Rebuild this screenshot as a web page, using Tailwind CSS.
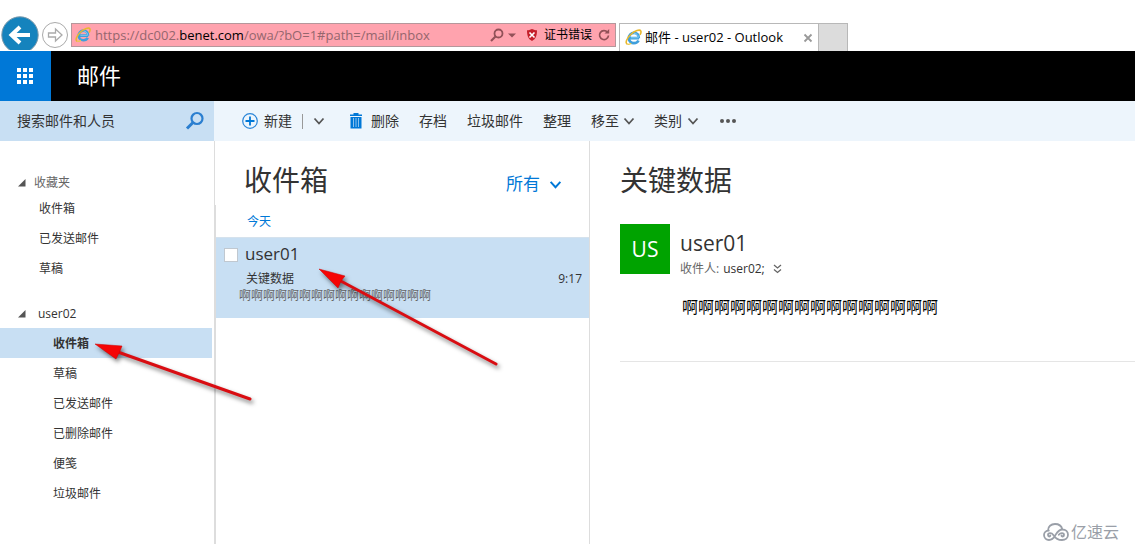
<!DOCTYPE html>
<html lang="zh-CN">
<head>
<meta charset="utf-8">
<title>邮件 - user02 - Outlook</title>
<script src="https://cdn.jsdelivr.net/npm/@tailwindcss/browser@4"></script>
</head>
<body class="bg-white font-['Open_Sans','Noto_Sans_CJK_SC',sans-serif] text-xs text-[#333333]">
<svg class="hidden">
  <symbol id="ie" viewBox="0 0 16 16">
    <path d="M13.2 8.6H5.1M13 8.6C13.3 5.300 11 3.600 8.500 3.600 5.700 3.600 3.700 5.800 3.700 8.500 3.700 11.300 5.700 13.300 8.400 13.300c2 0 3.500-.8 4.300-2.500" fill="none" stroke="#3f9fdc" stroke-width="2.600"/>
    <path d="M12.600 8.300H5.500M12.600 7.800C12.500 5.600 10.700 4.100 8.500 4" fill="none" stroke="#86d0f5" stroke-width=".9"/>
    <path d="M2.400 14.300C-.3 13.500 1.600 8.800 5.400 5.200 9.300 1.500 14 .1 14.900 1.900c.5 1-.1 2.400-.8 3.600" fill="none" stroke="#e8b82e" stroke-width="1.500"/>
    <path d="M2.400 14.300c1 .4 2.300-.2 3.500-.9" fill="none" stroke="#e8c84e" stroke-width="1.300"/>
  </symbol>
  <symbol id="chev" viewBox="0 0 12 12"><path d="M1.500 3.500 6 8.500l4.500-5" fill="none" stroke="currentColor" stroke-width="1.800"/></symbol>
  <symbol id="fold" viewBox="0 0 8 8"><path d="M7.500 0v7.500H0z" fill="#555"/></symbol>
</svg>

<div class="relative flex min-h-screen flex-col overflow-hidden">
  <header class="flex h-[51px] items-end">
    <div class="flex h-9 w-[71px] shrink-0 items-start">
      <button aria-label="后退" class="h-[35px] w-10 overflow-hidden"><svg class="h-10 w-10" viewBox="0 0 40 40"><circle cx="20" cy="20" r="18.200" fill="#1583bd" stroke="#7d9aab"/><path d="M30 20H12M20 12l-8.500 8 8.500 8" fill="none" stroke="#fff" stroke-width="4"/></svg></button>
      <button aria-label="前进" class="h-10 w-[30px]"><svg class="h-10 w-[30px]" viewBox="0 0 30 40"><circle cx="15" cy="20" r="12.500" fill="#fff" stroke="#aaa"/><path d="M8.500 18h7v-4l6.500 6-6.500 6v-4h-7z" fill="#fff" stroke="#aaa" stroke-width="1.300"/></svg></button>
    </div>
    <div class="mb-1 flex h-6 w-[545px] items-center border border-[#b5979b] bg-[#ffa3ae] pr-1 pl-[3px]">
      <svg class="mr-1 h-4 w-4"><use href="#ie"/></svg>
      <div role="textbox" aria-label="地址" contenteditable="true" spellcheck="false" class="flex-1 text-[13px] leading-5 whitespace-nowrap text-[#95666d]">https://dc002.<span class="text-black">benet.com</span>/owa/?bO=1#path=/mail/inbox</div>
      <button aria-label="搜索" class="flex items-center gap-1"><svg class="h-[14px] w-[14px]" viewBox="0 0 14 14"><circle cx="8.500" cy="5.500" r="4" fill="none" stroke="#925158" stroke-width="1.800"/><path d="m5.500 8.500-4.500 4.500" stroke="#925158" stroke-width="2.200"/></svg><svg class="h-2 w-2" viewBox="0 0 8 8"><path d="M0 2.500h8L4 6.500z" fill="#925158"/></svg></button>
      <button class="ml-2 flex items-center gap-1 text-[12px] text-black"><svg class="h-4 w-4" viewBox="0 0 16 16"><path d="M8 2c2 1 3.500 1.300 5 1.300 0 5-1 8.700-5 10.700-4-2-5-5.700-5-10.700C4.500 3.300 6 3 8 2z" fill="#c51f2a"/><path d="m5.500 5.500 5 5m0-5-5 5" stroke="#fff" stroke-width="1.600"/></svg>证书错误</button>
      <button aria-label="刷新" class="ml-[5px]"><svg class="h-[14px] w-[14px]" viewBox="0 0 14 14"><path d="M10.500 4.200A4.500 4.500 0 1 0 11.500 7.500" fill="none" stroke="#925158" stroke-width="1.700"/><path d="M7.500 5.500h4.700V1z" fill="#925158"/></svg></button>
    </div>
    <div class="ml-[3px] flex h-7 w-[200px] items-center border-x border-t border-[#b8b8b8] bg-white px-[5px] text-black">
      <svg class="mr-[3px] h-[17px] w-[17px]"><use href="#ie"/></svg>
      <span class="flex-1 text-[13px] whitespace-nowrap">邮件 - user02 - Outlook</span>
      <button aria-label="关闭标签页"><svg class="h-[10px] w-[10px]" viewBox="0 0 10 10"><path d="m1.500 1.500 7 7m0-7-7 7" stroke="#999" stroke-width="1.800"/></svg></button>
    </div>
    <button aria-label="新标签页" class="h-7 w-[29px] border-t border-r border-[#b8b8b8] bg-[#dcdcdc]"></button>
  </header>

  <div class="flex h-[50px] items-center bg-black">
    <button aria-label="应用启动器" class="flex h-full w-[51px] items-center justify-center bg-[#0078d7] pr-px pb-px"><svg class="h-4 w-4" viewBox="0 0 16 16" fill="#fff"><path d="M0 0h4v4H0zM6 0h4v4H6zM12 0h4v4h-4zM0 6h4v4H0zM6 6h4v4H6zM12 6h4v4h-4zM0 12h4v4H0zM6 12h4v4H6zM12 12h4v4h-4z"/></svg></button>
    <h1 class="ml-[26px] text-[22px] text-white">邮件</h1>
  </div>

  <div class="flex h-10 bg-[#edf5fc]">
    <form class="flex w-[214px] shrink-0 items-center bg-[#c8dff3] pr-[9px] pl-[17px]">
      <input type="text" aria-label="搜索邮件和人员" placeholder="搜索邮件和人员" class="min-w-0 flex-1 bg-transparent text-sm outline-none placeholder:text-[#333333]">
      <button type="button" aria-label="搜索"><svg class="h-5 w-5" viewBox="0 0 20 20"><circle cx="12" cy="7.500" r="5.500" fill="none" stroke="#2b7fd0" stroke-width="2.200"/><path d="m8 11.500-6 6" stroke="#2b7fd0" stroke-width="3"/></svg></button>
    </form>
    <div class="flex items-center pl-7 text-sm">
      <button class="flex items-center gap-[6px]"><svg class="h-4 w-4" viewBox="0 0 16 16"><circle cx="8" cy="8" r="7.300" fill="none" stroke="#2b86d8" stroke-width="1.200"/><path d="M8 3.500v9M3.500 8h9" stroke="#0078d7" stroke-width="1.800"/></svg>新建</button>
      <span class="ml-[10px] h-[15px] w-px bg-[#999]"></span>
      <button aria-label="新建选项" class="ml-[10px]"><svg class="h-3 w-3 text-[#555]"><use href="#chev"/></svg></button>
      <button class="ml-6 flex items-center gap-2"><svg class="h-4 w-[14px]" viewBox="0 0 14 16"><path d="M4.500 0h5v1.500H13V3H1V1.500h3.500zM1.500 4h11v11.500h-11z" fill="#0078d7"/><path d="M4.500 5v9M7 5v9M9.500 5v9" stroke="#9bcaf0" stroke-width=".9"/></svg>删除</button>
      <button class="ml-5">存档</button>
      <button class="ml-5">垃圾邮件</button>
      <button class="ml-5">整理</button>
      <button class="ml-5 flex items-center gap-1">移至<svg class="h-3 w-3 text-[#555]"><use href="#chev"/></svg></button>
      <button class="ml-[19px] flex items-center gap-[5px]">类别<svg class="h-3 w-3 text-[#555]"><use href="#chev"/></svg></button>
      <button aria-label="更多" class="ml-5"><svg class="h-4 w-[18px]" viewBox="0 0 18 16" fill="#555"><circle cx="3" cy="8" r="2"/><circle cx="9" cy="8" r="2"/><circle cx="15" cy="8" r="2"/></svg></button>
    </div>
  </div>

  <main class="flex flex-1">
    <nav class="w-[214px] shrink-0 pt-[30px] pr-[2px]">
      <button class="flex h-[22px] items-center gap-2 pt-px pl-[18px] text-[#666]"><svg class="h-2 w-2"><use href="#fold"/></svg>收藏夹</button>
      <ul>
        <li><a href="#" class="flex h-[30px] items-center pt-[2px] pl-[39px]">收件箱</a></li>
        <li><a href="#" class="flex h-[30px] items-center pt-[2px] pl-[39px]">已发送邮件</a></li>
        <li><a href="#" class="flex h-[30px] items-center pt-[2px] pl-[39px]">草稿</a></li>
      </ul>
      <button class="mt-[15px] flex h-[30px] items-center gap-3 pt-[2px] pl-[18px]"><svg class="h-2 w-2"><use href="#fold"/></svg>user02</button>
      <ul>
        <li><a href="#" class="flex h-[30px] items-center bg-[#c8dff3] pt-[2px] pl-[53px] font-bold">收件箱</a></li>
        <li><a href="#" class="flex h-[30px] items-center pt-[2px] pl-[53px]">草稿</a></li>
        <li><a href="#" class="flex h-[30px] items-center pt-[2px] pl-[53px]">已发送邮件</a></li>
        <li><a href="#" class="flex h-[30px] items-center pt-[2px] pl-[53px]">已删除邮件</a></li>
        <li><a href="#" class="flex h-[30px] items-center pt-[2px] pl-[53px]">便笺</a></li>
        <li><a href="#" class="flex h-[30px] items-center pt-[2px] pl-[53px]">垃圾邮件</a></li>
      </ul>
    </nav>

    <section class="flex w-[376px] shrink-0 flex-col border-r border-l border-[#dddddd]">
      <div class="flex h-16 items-end justify-between pr-[27px] pl-[29px]">
        <h2 class="text-[28px] leading-[50px]">收件箱</h2>
        <button class="flex items-center gap-[9px] text-[17px] leading-[42px] text-[#0078d7]">所有<svg class="h-[13px] w-[13px]"><use href="#chev"/></svg></button>
      </div>
      <div class="flex-1 border-l border-[#dddddd]">
        <h3 class="h-8 pt-px pl-[31px] leading-8 text-[#0078d7]">今天</h3>
        <article class="flex h-[81px] border-t border-[#d5e2ed] bg-[#c8dff3] pr-[7px] pl-2">
          <input type="checkbox" aria-label="选择邮件" class="mt-[10px] h-[14px] w-[14px] shrink-0 appearance-none border border-[#c0c8d0] bg-white">
          <div class="flex-1">
            <h4 class="pt-1 pl-[7px] text-[17px] leading-6">user01</h4>
            <div class="flex justify-between pl-2 leading-[26px]"><span>关键数据</span><time>9:17</time></div>
            <p class="pl-px leading-[8px] text-[#666]">啊啊啊啊啊啊啊啊啊啊啊啊啊啊啊啊</p>
          </div>
        </article>
      </div>
    </section>

    <article class="min-w-0 flex-1 pt-[14px] pl-[30px]">
      <h2 class="text-[28px] leading-[50px]">关键数据</h2>
      <div class="mt-[19px] flex gap-[10px]">
        <div class="flex h-[50px] w-[50px] items-center justify-center bg-[#00a300] text-[21px] text-white">US</div>
        <div class="pt-1">
          <h3 class="text-[21px] leading-[30px]">user01</h3>
          <p class="flex items-center leading-[22px]"><span class="mr-1 text-[#666]">收件人:</span>user02;<button aria-label="展开收件人" class="ml-2"><svg class="h-[10px] w-[9px]" viewBox="0 0 9 10"><path d="m1 1 3.500 3L8 1M1 5.500l3.500 3 3.500-3" fill="none" stroke="#666" stroke-width="1.300"/></svg></button></p>
        </div>
      </div>
      <p class="mt-[15px] border-b border-[#e5e5e5] pb-[42px] pl-[62px] text-base leading-6 text-black">啊啊啊啊啊啊啊啊啊啊啊啊啊啊啊啊</p>
    </article>
  </main>

  <svg class="pointer-events-none absolute top-0 left-0 h-[544px] w-[600px] drop-shadow-[2px_3px_2px_rgba(0,0,0,0.5)]" viewBox="0 0 600 544" aria-hidden="true">
    <path d="m115 351 135 48M337 279l159 85" stroke="#d90d12" stroke-width="3" stroke-linecap="round"/>
    <path d="m95 344 27 2-2 5-4 8zM319 269l26 7-4 5-3 7z" fill="#f50505" stroke="#c00" stroke-width=".5"/>
  </svg>

  <div class="absolute right-4 bottom-0 flex items-center gap-[2px] text-base leading-6 text-[#9a9fa8]">
    <svg class="h-[18px] w-[26px]" viewBox="0 0 26 18" fill="none" stroke="#9a9fa8" stroke-width="1.800" stroke-linecap="round"><path d="M5 7.500C5 3.500 8 1 12 1c4 0 6.500 2 7.300 5.200M7.300 12.500c0 1.500-2.300 1.300-2.300-.4 0-2.400 3.600-2.600 5.300-.2 1.700 2.600 4.200 5.100 8.700 5.100 3.500 0 6-2.300 6-5.300s-2.400-5.200-5.500-5.200c-4.500 0-5.700 3.300-7.500 6.300C10.500 15.500 9 17 6 17a5 5 0 0 1-5-4.900C1 9.500 3 7.500 5.800 7.500"/><path d="M18.500 12.500c0 1.500 2.500 1.300 2.500-.5 0-2.400-3.500-2.600-5.200-.2"/></svg>亿速云
  </div>
</div>
</body>
</html>
